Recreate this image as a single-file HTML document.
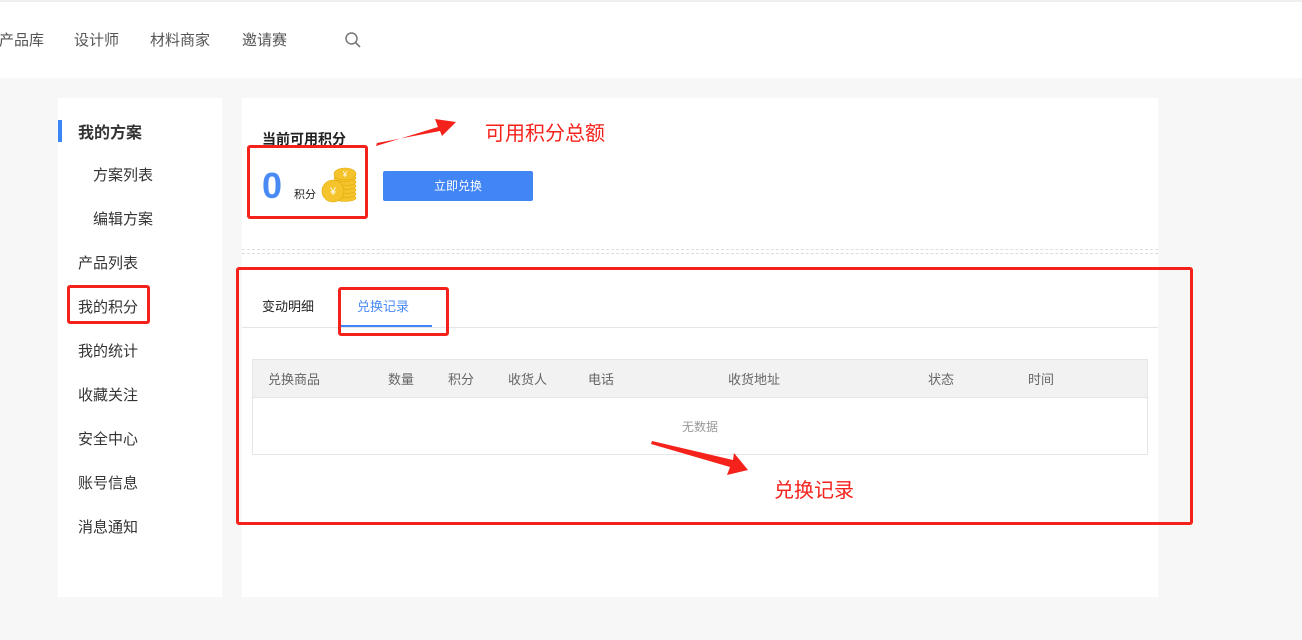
<!DOCTYPE html>
<html><head><meta charset="utf-8"><style>
*{margin:0;padding:0;box-sizing:border-box}
body{width:1302px;height:640px;background:#f7f7f7;font-family:"Liberation Sans","Noto Sans CJK SC",sans-serif;position:relative;overflow:hidden;color:#333}
.a{position:absolute;white-space:nowrap}
.hdr{position:absolute;left:0;top:0;width:1302px;height:78px;background:#fff;border-top:2px solid #eee}
.nav{font-size:15px;color:#555;top:29px}
.side{position:absolute;left:58px;top:98px;width:164px;height:499px;background:#fff}
.si{font-size:15px;color:#333;left:20px}
.main{position:absolute;left:242px;top:98px;width:916px;height:499px;background:#fff}
.red{position:absolute;border:3px solid #f5221b;border-radius:3px}
.th{font-size:13px;color:#666;top:369px}
</style></head><body>
<div class="hdr"></div>
<div class="a nav" style="left:-1px">产品库</div>
<div class="a nav" style="left:74px">设计师</div>
<div class="a nav" style="left:150px">材料商家</div>
<div class="a nav" style="left:242px">邀请赛</div>
<svg class="a" style="left:344px;top:31px" width="18" height="18"><circle cx="7.5" cy="7.5" r="5.5" fill="none" stroke="#777" stroke-width="1.5"/><line x1="11.5" y1="11.5" x2="16" y2="16" stroke="#777" stroke-width="1.6"/></svg>

<div class="side">
<div class="a" style="left:0;top:22px;width:4px;height:22px;background:#3b86f7"></div>
<div class="a si" style="top:21px;font-weight:bold;font-size:16px">我的方案</div>
<div class="a si" style="top:66px;left:35px">方案列表</div>
<div class="a si" style="top:110px;left:35px">编辑方案</div>
<div class="a si" style="top:154px">产品列表</div>
<div class="a si" style="top:198px">我的积分</div>
<div class="a si" style="top:242px">我的统计</div>
<div class="a si" style="top:286px">收藏关注</div>
<div class="a si" style="top:330px">安全中心</div>
<div class="a si" style="top:374px">账号信息</div>
<div class="a si" style="top:418px">消息通知</div>
</div>

<div class="main">
<div class="a" style="left:20px;top:31px;font-size:14px;font-weight:bold;color:#222">当前可用积分</div>
<div class="a" style="left:20px;top:68px;font-size:36px;font-weight:bold;color:#4a8af4;line-height:40px">0</div>
<div class="a" style="left:52px;top:88px;font-size:11px;color:#222">积分</div>
<svg class="a" style="left:79px;top:68px" width="36" height="38">
<g fill="#f5c42c" stroke="#e0a800" stroke-width=".6">
<ellipse cx="24" cy="32" rx="11" ry="3.5"/><ellipse cx="24" cy="28" rx="11" ry="3.5"/><ellipse cx="24" cy="24" rx="11" ry="3.5"/><ellipse cx="24" cy="20" rx="11" ry="3.5"/><ellipse cx="24" cy="16" rx="11" ry="3.5"/><ellipse cx="24" cy="12" rx="11" ry="3.5"/><ellipse cx="24" cy="8" rx="11" ry="6"/>
<circle cx="12" cy="25" r="11"/></g>
<text x="12" y="29" font-size="11" fill="#fff" text-anchor="middle" font-family="Liberation Sans">¥</text>
<text x="24" y="11" font-size="8" fill="#fff" text-anchor="middle" font-family="Liberation Sans">¥</text>
</svg>
<div class="a" style="left:141px;top:73px;width:150px;height:30px;background:#4285f4;border-radius:2px;color:#fff;font-size:12px;text-align:center;line-height:30px">立即兑换</div>
<div class="a" style="left:0;top:151px;width:916px;border-top:1px dashed #ddd"></div>
<div class="a" style="left:0;top:155px;width:916px;border-top:1px dashed #ddd"></div>
<div class="a" style="left:20px;top:198px;font-size:13px;color:#222">变动明细</div>
<div class="a" style="left:115px;top:198px;font-size:13px;color:#4a8af4">兑换记录</div>
<div class="a" style="left:96px;top:227px;width:94px;height:2px;background:#4285f4"></div>
<div class="a" style="left:0;top:229px;width:916px;border-top:1px solid #e5e5e5"></div>
<div class="a" style="left:10px;top:261px;width:896px;height:96px;border:1px solid #e5e5e5"></div>
<div class="a" style="left:11px;top:262px;width:894px;height:38px;background:#f2f2f2;border-bottom:1px solid #e5e5e5"></div>
<div class="a" style="left:440px;top:320px;font-size:12px;color:#999">无数据</div>
</div>
<div class="a th" style="left:268px">兑换商品</div>
<div class="a th" style="left:388px">数量</div>
<div class="a th" style="left:448px">积分</div>
<div class="a th" style="left:508px">收货人</div>
<div class="a th" style="left:588px">电话</div>
<div class="a th" style="left:728px">收货地址</div>
<div class="a th" style="left:928px">状态</div>
<div class="a th" style="left:1028px">时间</div>

<div class="red" style="left:247px;top:145px;width:121px;height:74px"></div>
<div class="red" style="left:67px;top:285px;width:83px;height:39px"></div>
<div class="red" style="left:338px;top:287px;width:111px;height:49px"></div>
<div class="red" style="left:236px;top:267px;width:957px;height:258px"></div>
<svg class="a" style="left:0;top:0" width="1302" height="640">
<polygon points="376,146 438,127 435,119 456,122 442,136 440,131 377,143" fill="#f5221b"/>
<polygon points="652,441 733,460 734,453 748,470 727,475 730,467 651,444" fill="#f5221b"/>
</svg>
<div class="a" style="left:485px;top:117px;font-size:20px;color:#f5221b">可用积分总额</div>
<div class="a" style="left:774px;top:474px;font-size:20px;color:#f5221b">兑换记录</div>
</body></html>
